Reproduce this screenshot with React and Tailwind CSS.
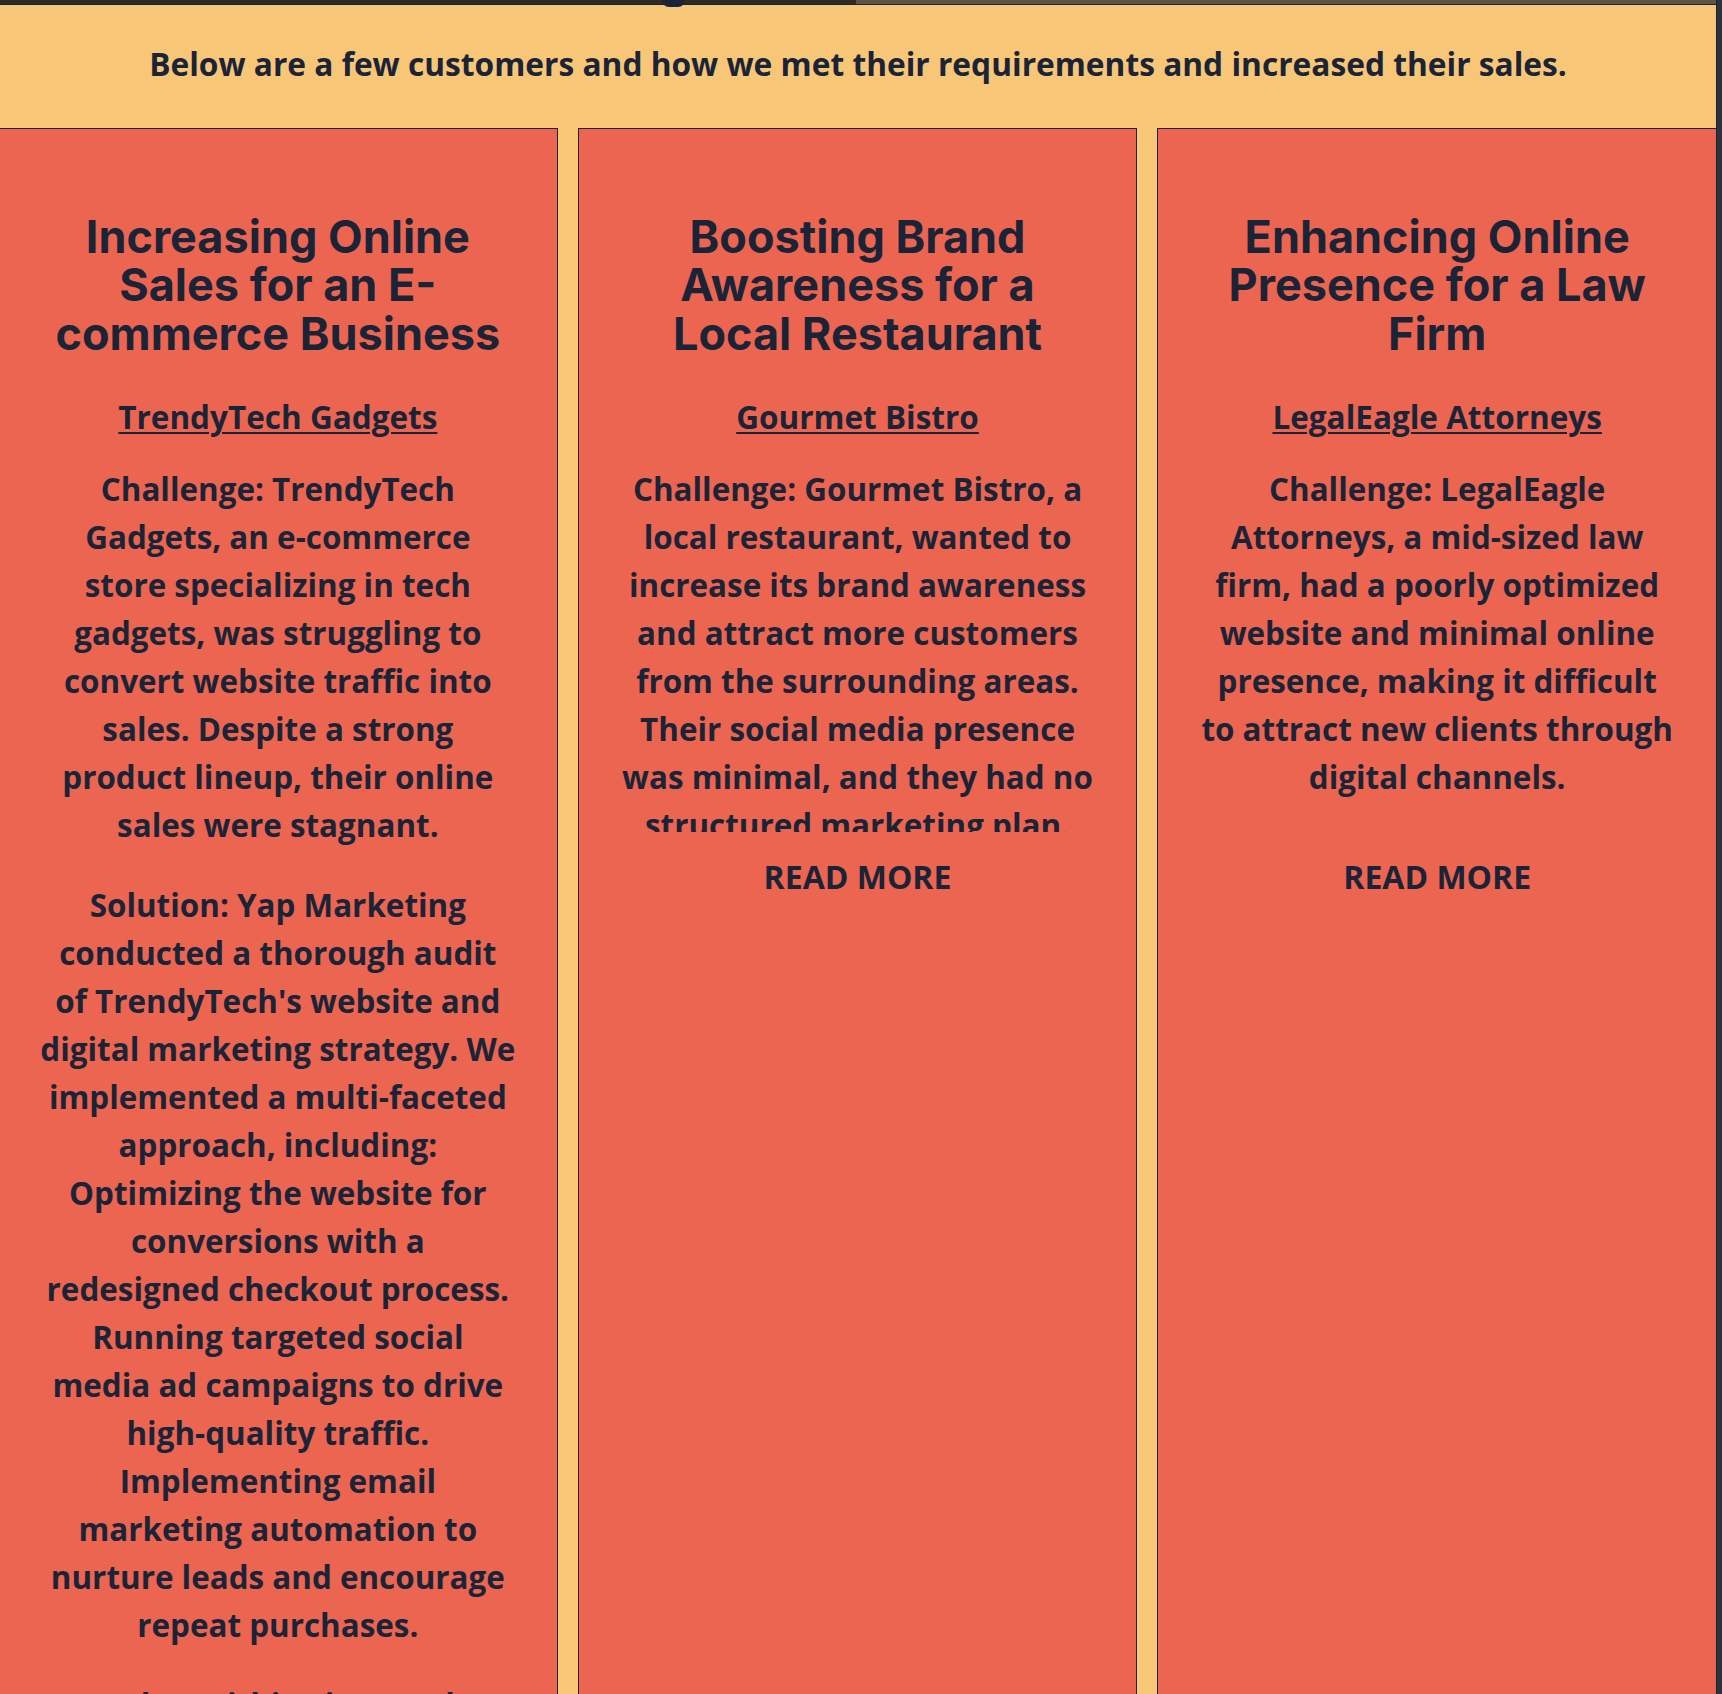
const cases = [
  {
    title: ["Increasing Online", "Sales for an E-", "commerce Business"],
    client: "TrendyTech Gadgets",
    expanded: true,
    paragraphs: [
      [
        "Challenge: TrendyTech",
        "Gadgets, an e-commerce",
        "store specializing in tech",
        "gadgets, was struggling to",
        "convert website traffic into",
        "sales. Despite a strong",
        "product lineup, their online",
        "sales were stagnant.",
      ],
      [
        "Solution: Yap Marketing",
        "conducted a thorough audit",
        "of TrendyTech's website and",
        "digital marketing strategy. We",
        "implemented a multi-faceted",
        "approach, including:",
        "Optimizing the website for",
        "conversions with a",
        "redesigned checkout process.",
        "Running targeted social",
        "media ad campaigns to drive",
        "high-quality traffic.",
        "Implementing email",
        "marketing automation to",
        "nurture leads and encourage",
        "repeat purchases.",
      ],
      [
        "Results: Within six months,",
        "TrendyTech Gadgets saw a",
        "significant boost in sales.",
      ],
    ],
  },
  {
    title: ["Boosting Brand", "Awareness for a", "Local Restaurant"],
    client: "Gourmet Bistro",
    expanded: false,
    paragraphs: [
      [
        "Challenge: Gourmet Bistro, a",
        "local restaurant, wanted to",
        "increase its brand awareness",
        "and attract more customers",
        "from the surrounding areas.",
        "Their social media presence",
        "was minimal, and they had no",
        "structured marketing plan.",
      ],
      [
        "Solution: We developed a",
        "local marketing strategy.",
      ],
    ],
  },
  {
    title: ["Enhancing Online", "Presence for a Law", "Firm"],
    client: "LegalEagle Attorneys",
    expanded: false,
    paragraphs: [
      [
        "Challenge: LegalEagle",
        "Attorneys, a mid-sized law",
        "firm, had a poorly optimized",
        "website and minimal online",
        "presence, making it difficult",
        "to attract new clients through",
        "digital channels.",
      ],
    ],
  },
];

const Lines = ({ lines }) =>
  lines.map((l, i) => (
    <span key={i} className="block whitespace-nowrap">
      {l}
    </span>
  ));

const CaseCard = ({ item }) => (
  <div className="flex-1 bg-[#ec6551] border-[1.5px] border-b-0 border-[#1b2437] pt-[84px] px-[10px] text-center text-[#1b2437]">
    <h2 className="font-['Inter',sans-serif] font-bold text-[45px] leading-[48.4px]">
      <Lines lines={item.title} />
    </h2>

    <a
      href="#"
      className="block mt-[35px] font-['Open_Sans',sans-serif] font-bold text-[31.5px] leading-[48px] underline decoration-[2px] underline-offset-[3px]"
    >
      {item.client}
    </a>

    <div
      className={
        "mt-[24px] flex flex-col gap-[32px] font-['Open_Sans',sans-serif] font-bold text-[31.4px] leading-[48px] " +
        (item.expanded ? "" : "h-[367px] overflow-hidden")
      }
    >
      {item.paragraphs.map((p, i) => (
        <p key={i}>
          <Lines lines={p} />
        </p>
      ))}
    </div>

    {!item.expanded && (
      <button
        type="button"
        className="mt-[21px] font-['Open_Sans',sans-serif] font-bold text-[32px] leading-[48px] uppercase"
      >
        Read More
      </button>
    )}
  </div>
);

export default function App() {
  return (
    <div className="flex min-h-[1694px] w-full overflow-hidden bg-[#2c313a]">
      <div className="w-[1717px] shrink-0 flex flex-col border-r border-[#1b2437] bg-[#f8c677]">
        {/* top strip */}
        <div className="relative flex h-[5px] border-b border-[#1b2437]">
          <div className="w-[856px] bg-[#2f2a24]" />
          <div className="flex-1 bg-[#5f5444]" />
          <span className="absolute left-[662px] top-0 h-[7px] w-[23px] rounded-b-full bg-[#1b2437]" />
        </div>

        {/* banner */}
        <div className="h-[123px] flex items-center justify-center">
          <p className="font-['Open_Sans',sans-serif] font-bold text-[31.7px] text-[#1b2437] -mt-[6px] whitespace-nowrap">
            Below are a few customers and how we met their requirements and increased their sales.
          </p>
        </div>

        {/* case studies */}
        <div className="flex flex-1 gap-[20px] -ml-[2px] w-[1719px]">
          {cases.map((c, i) => (
            <CaseCard key={i} item={c} />
          ))}
        </div>
      </div>
      <div className="flex-1" />
    </div>
  );
}
